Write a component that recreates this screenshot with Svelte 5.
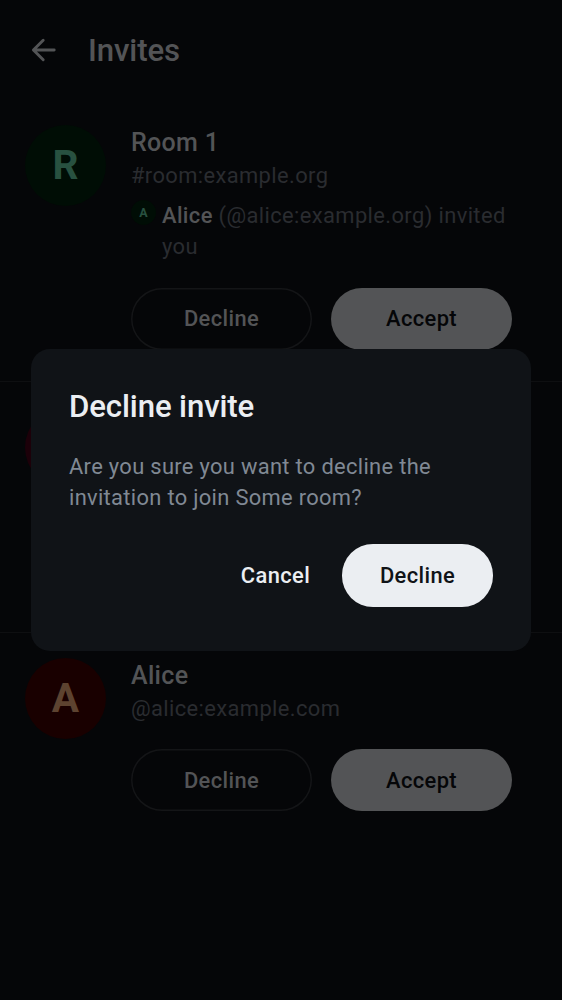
<script>
  const invites = [
    { name: 'Room 1', id: '#room:example.org', initial: 'R', tone: 'green', inviter: { name: 'Alice', id: '@alice:example.org', initial: 'A' } },
    { name: '', id: '', initial: '', tone: 'pink', inviter: null, covered: true },
    { name: 'Alice', id: '@alice:example.com', initial: 'A', tone: 'red', inviter: null }
  ];
</script>

<div class="screen">
  <header>
    <svg class="back" width="38" height="38" viewBox="0 0 38 38" fill="none">
      <path d="M19.2 9.2 9.4 19l9.8 9.8M9.6 19h20.6" stroke="currentColor" stroke-width="2.9" stroke-linecap="round" stroke-linejoin="round" />
    </svg>
    <h1>Invites</h1>
  </header>

  <main>
    {#each invites as invite}
      <section class="invite" class:covered={invite.covered}>
        <div class="avatar {invite.tone}">{invite.initial}</div>
        {#if !invite.covered}
          <div class="details">
            <div class="name">{invite.name}</div>
            <div class="id">{invite.id}</div>
            {#if invite.inviter}
              <div class="inviter">
                <div class="mini">{invite.inviter.initial}</div>
                <p><strong>{invite.inviter.name}</strong> ({invite.inviter.id}) invited you</p>
              </div>
            {/if}
            <div class="actions">
              <button class="outlined">Decline</button>
              <button class="filled">Accept</button>
            </div>
          </div>
        {/if}
      </section>
    {/each}
  </main>

  <div class="overlay">
    <div class="dialog" role="dialog" aria-modal="true">
      <h2>Decline invite</h2>
      <p>Are you sure you want to decline the invitation to join Some room?</p>
      <div class="dialog-actions">
        <button class="text">Cancel</button>
        <button class="confirm">Decline</button>
      </div>
    </div>
  </div>
</div>

<style>
  :global(body) { background: #050608; }
  .screen {
    position: relative;
    width: 562px;
    height: 1000px;
    overflow: hidden;
    box-sizing: border-box;
    background: #050608;
    color: #535456;
    font-family: Roboto, sans-serif;
  }
  h1, h2, p { margin: 0; }
  header {
    display: flex;
    align-items: center;
    gap: 19px;
    height: 100px;
    padding-left: 24px;
    box-sizing: border-box;
  }
  .back { margin-right: 7px; }
  h1 { font-size: 31.2px; line-height: 40px; padding-top: 1px; font-weight: 500; letter-spacing: -0.1px; }
  .invite {
    display: flex;
    align-items: flex-start;
    gap: 25px;
    padding: 25px 50px 31px 25px;
    border-bottom: 1px solid #0e0f11;
  }
  .invite:last-child { border-bottom: 0; }
  .covered { height: 194px; }
  .avatar {
    flex: none;
    width: 81px;
    height: 81px;
    border-radius: 50%;
    display: flex;
    align-items: center;
    justify-content: center;
    font-size: 40.6px;
    line-height: 48px;
    padding-bottom: 1px;
    box-sizing: border-box;
    font-weight: 700;
  }
  .green { background: #000d05; color: #285140; }
  .pink { background: #1c0009; color: #5c2c40; }
  .red { background: #190000; color: #5d4330; }
  .details { flex: 1; min-width: 0; }
  .name {
    height: 35px;
    font-size: 25px;
    line-height: 36px;
    font-weight: 500;
    letter-spacing: 0.33px;
  }
  .id {
    font-size: 21.9px;
    line-height: 31px;
    letter-spacing: 0.39px;
    color: #2a2c30;
  }
  .inviter {
    display: flex;
    align-items: flex-start;
    gap: 6px;
    margin-top: 9px;
    font-size: 21.9px;
    line-height: 31.2px;
    letter-spacing: 0.39px;
    color: #2a2c30;
  }
  .inviter strong { font-weight: 500; color: #535456; }
  .mini {
    flex: none;
    width: 25px;
    height: 25px;
    border-radius: 50%;
    background: #000d05;
    color: #285140;
    font-size: 12.5px;
    line-height: 25px;
    font-weight: 700;
    text-align: center;
    letter-spacing: 0;
  }
  .actions {
    display: grid;
    grid-template-columns: 1fr 1fr;
    gap: 19px;
    margin-top: 25.3px;
  }
  button {
    height: 62px;
    padding: 0;
    border: 0;
    border-radius: 31px;
    background: none;
    color: inherit;
    font: 500 21.9px/31px Roboto, sans-serif;
    letter-spacing: 0.38px;
  }
  .outlined { box-shadow: inset 0 0 0 1.5px #141517; }
  .filled { background: #535456; color: #050608; }
  .overlay {
    position: absolute;
    inset: 0;
    display: flex;
    align-items: center;
    justify-content: center;
  }
  .dialog {
    width: 500px;
    height: 302px;
    padding: 39px 38px 38px;
    box-sizing: border-box;
    border-radius: 19px;
    background: #101317;
    color: #ebeef2;
  }
  h2 { font-size: 31.2px; line-height: 38px; font-weight: 500; letter-spacing: -0.12px; }
  .dialog p {
    margin-top: 25px;
    font-size: 21.9px;
    line-height: 31.2px;
    letter-spacing: 0.32px;
    color: #808994;
  }
  .dialog-actions {
    display: flex;
    justify-content: flex-end;
    align-items: center;
    margin-top: 31px;
  }
  .text { width: 109px; margin-right: 12px; }
  .confirm { width: 151px; height: 62.5px; background: #ebeef2; color: #101317; }
</style>
